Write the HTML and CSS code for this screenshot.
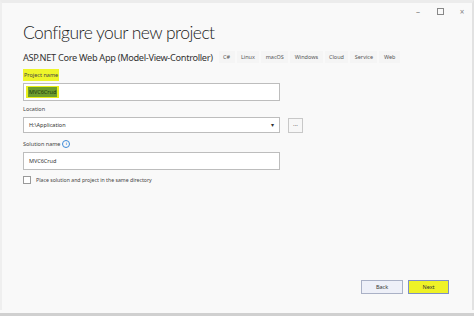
FILE: index.html
```html
<!DOCTYPE html>
<html lang="en">
<head>
  <meta charset="UTF-8" />
  <title>Configure your new project</title>
  <link rel="stylesheet" href="styles.css">
</head>
<body>

<div class="window">
  <div class="title-bar">
    <span class="win-btn">&#8211;</span>
    <span class="win-btn"><span class="max"></span></span>
    <span class="win-btn">&#215;</span>
  </div>

  <div class="content">
    <h1>Configure your new project</h1>

    <div class="template-row">
      <span class="template-name">ASP.NET Core Web App (Model-View-Controller)</span>
      <span class="tag">C#</span>
      <span class="tag">Linux</span>
      <span class="tag">macOS</span>
      <span class="tag">Windows</span>
      <span class="tag">Cloud</span>
      <span class="tag">Service</span>
      <span class="tag">Web</span>
    </div>

    <label class="field-label"><span class="marker">Project name</span></label>
    <div class="text-box"><span class="marker-strong"><span class="selected">MVC6Crud</span></span></div>

    <label class="field-label tight">Location</label>
    <div class="location-row">
      <div class="text-box select">
        <span>H:\Application</span>
        <span class="arrow">&#9662;</span>
      </div>
      <div class="browse">...</div>
    </div>

    <label class="field-label">Solution name <span class="info">i</span></label>
    <div class="text-box"><span>MVC6Crud</span></div>

    <div class="check-row">
      <span class="check"></span>
      <span>Place solution and project in the same directory</span>
    </div>

    <div class="footer">
      <button class="btn">Back</button>
      <button class="btn next">Next</button>
    </div>
  </div>
</div>
<div class="bottom-bar"></div>

</body>
</html>
```

FILE: styles.css
```css
body {
  margin: 0;
  font-family: "Noto Sans", "Open Sans", sans-serif;
  background-color: #f9f9f9;
  color: #333;
}

.window {
  height: 310px;
  box-sizing: border-box;
  border-top: 3px solid #ececec;
  border-left: 2px solid #efefef;
  border-right: 2px solid #e2e2e2;
  display: flex;
  flex-direction: column;
}

.title-bar {
  display: flex;
  justify-content: flex-end;
  gap: 12px;
  padding: 2px 5px 0 0;
  height: 12px;
}

.win-btn {
  width: 10px;
  height: 12px;
  font-size: 8px;
  color: #888;
  display: flex;
  align-items: center;
  justify-content: center;
}

.max {
  width: 5px;
  height: 5px;
  border: 1px solid #888;
}

.content {
  flex: 1;
  display: flex;
  flex-direction: column;
  padding: 0 0 0 21px;
}

h1 {
  margin: 4px 0 0;
  font-family: Lato, "Noto Sans", sans-serif;
  font-size: 17.5px;
  font-weight: 300;
  color: #222;
  letter-spacing: -0.55px;
  line-height: 24px;
}

.template-row {
  display: flex;
  align-items: center;
  margin-top: 5px;
  height: 14px;
}

.template-name {
  font-size: 9.2px;
  color: #333;
  letter-spacing: -0.3px;
  margin-right: 6px;
}

.tag {
  font-size: 5.5px;
  color: #555;
  padding: 2px 4.4px;
  margin-right: 2px;
  background-color: #f5f5f5;
}

.field-label {
  font-size: 5.5px;
  color: #444;
  margin-top: 6px;
  height: 10px;
  line-height: 10px;
  display: flex;
  align-items: center;
  gap: 2px;
}

.field-label.tight {
  margin-top: 3px;
}

.marker {
  background-color: #eef52a;
  padding: 1px 1px;
}

.text-box {
  width: 257px;
  height: 18px;
  box-sizing: border-box;
  border: 1px solid #bdbdbd;
  background-color: #fff;
  margin-top: 3px;
  padding: 0 5px;
  display: flex;
  align-items: center;
  font-size: 5.5px;
  color: #333;
}

.marker-strong {
  background-color: #e9ef1a;
  padding: 2px 2px;
  margin-left: -3px;
}

.selected {
  background-color: #6e9d2c;
  color: #1d3a10;
  padding: 1px 1px;
}

.location-row {
  display: flex;
  align-items: center;
  gap: 8px;
}

.select {
  height: 16px;
  justify-content: space-between;
}

.arrow {
  font-size: 6px;
  color: #333;
}

.browse {
  width: 15px;
  height: 15px;
  box-sizing: border-box;
  border: 1px solid #c8c8c8;
  background-color: #f7f7f7;
  margin-top: 3px;
  font-size: 6px;
  color: #555;
  text-align: center;
  line-height: 10px;
}

.info {
  width: 6px;
  height: 6px;
  border-radius: 50%;
  border: 1px solid #3c8ad8;
  color: #3c8ad8;
  font-size: 4px;
  line-height: 6px;
  text-align: center;
  font-weight: bold;
}

.check-row {
  display: flex;
  align-items: center;
  gap: 5px;
  margin-top: 6px;
  font-size: 5.2px;
  color: #444;
}

.check {
  width: 6px;
  height: 6px;
  border: 1px solid #9a9a9a;
  background-color: #fff;
}

.footer {
  margin-top: auto;
  display: flex;
  justify-content: flex-end;
  gap: 5px;
  padding: 0 23px 16px 0;
}

.btn {
  width: 42px;
  height: 14px;
  padding: 0;
  font-family: "Noto Sans", sans-serif;
  font-size: 5.5px;
  color: #333;
  background-color: #eef0f8;
  border: 1px solid #aab1c6;
}

.btn.next {
  width: 41px;
  background-color: #eef227;
  border-color: #7e8fc6;
}

.bottom-bar {
  height: 6px;
  background-color: #d0d0d0;
  border-top: 3px solid #f9f9f9;
}
```
